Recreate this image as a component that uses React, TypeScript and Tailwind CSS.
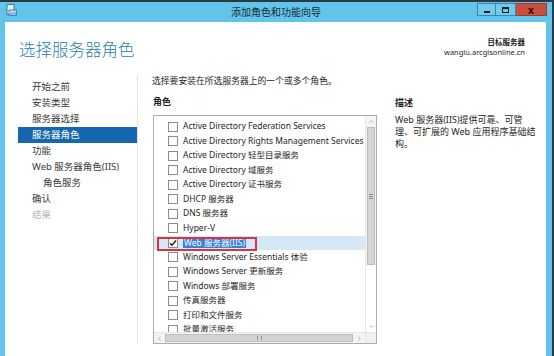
import { ChevronUp, ChevronDown, ChevronLeft, ChevronRight } from "lucide-react";

const font = { fontFamily: '"Noto Sans", "Noto Sans CJK SC", sans-serif' };

const navItems = [
  { label: "开始之前" },
  { label: "安装类型" },
  { label: "服务器选择" },
  { label: "服务器角色", active: true },
  { label: "功能" },
  { label: "Web 服务器角色(IIS)" },
  { label: "角色服务", indent: true },
  { label: "确认" },
  { label: "结果", disabled: true },
];

const roles = [
  "Active Directory Federation Services",
  "Active Directory Rights Management Services",
  "Active Directory 轻型目录服务",
  "Active Directory 域服务",
  "Active Directory 证书服务",
  "DHCP 服务器",
  "DNS 服务器",
  "Hyper-V",
  "Web 服务器(IIS)",
  "Windows Server Essentials 体验",
  "Windows Server 更新服务",
  "Windows 部署服务",
  "传真服务器",
  "打印和文件服务",
  "批量激活服务",
];

function Checkbox({ checked }: { checked?: boolean }) {
  return (
    <span className="w-[10px] h-[10px] border border-[#8c8c8c] bg-white flex items-center justify-center shrink-0">
      {checked && (
        <svg width="8" height="8" viewBox="0 0 8 8">
          <path d="M1 4.2 L3 6.3 L7 1.5" stroke="#222" strokeWidth="1.4" fill="none" />
        </svg>
      )}
    </span>
  );
}

function WindowIcon() {
  return (
    <svg width="11" height="12" viewBox="0 0 11 12">
      <rect x="1" y="0.5" width="7" height="10" fill="#e8f2fa" stroke="#3a78b0" />
      <rect x="3" y="6" width="7.5" height="5.5" fill="#8fb8dc" stroke="#3a78b0" strokeWidth="0.8" />
      <path d="M3.5 8.5 L5.5 7 L7 8 L9.5 6.8" stroke="#fff" strokeWidth="0.8" fill="none" />
    </svg>
  );
}

export default function App() {
  return (
    <div className="w-[554px] h-[356px] bg-[#2b3943] overflow-hidden" style={font}>
      <div className="w-[552px] h-[354px] mt-[2px] bg-[#62c4e8] flex flex-col">
        {/* title bar */}
        <div className="h-[20px] flex items-start relative">
          <div className="pl-[6px] pt-[2px]">
            <WindowIcon />
          </div>
          <div className="absolute left-0 right-0 top-[3px] text-center text-[10px] leading-[14px] text-[#1c2a33]">
            添加角色和功能向导
          </div>
          <div className="ml-auto mr-[5px] mt-[1px] flex h-[13px] relative">
            <div className="w-[19px] border border-[#3a86ad] bg-[#72cbea] flex items-center justify-center">
              <span className="w-[6px] h-[2px] bg-[#1a1a1a] mt-[4px]" />
            </div>
            <div className="w-[20px] border border-l-0 border-[#3a86ad] bg-[#72cbea] flex items-center justify-center">
              <span className="w-[7px] h-[6px] border border-t-2 border-[#1a1a1a]" />
            </div>
            <div className="w-[31px] border border-l-0 border-[#9e3a2f] bg-[#c9503f] flex items-center justify-center text-[10px] font-bold leading-none text-[#2a0d08]">
              x
            </div>
          </div>
        </div>

        {/* client area */}
        <div className="flex-1 ml-[5px] mr-[6px] bg-white flex flex-col">
          <div className="h-[53px] flex items-start justify-between">
            <h1 className="pl-[14px] pt-[18px] text-[16.5px] leading-[20px] font-light text-[#2c80ad]">
              选择服务器角色
            </h1>
            <div className="pr-[21px] pt-[15px] text-right text-[#1e1e1e]">
              <div className="text-[7.5px] leading-[10px] font-semibold">目标服务器</div>
              <div className="text-[7.5px] leading-[10px]">wanglu.arcgisonline.cn</div>
            </div>
          </div>

          <div className="flex flex-1">
            {/* nav */}
            <div className="w-[119px] ml-[13px] pt-[4px]">
              {navItems.map((item) => (
                <div
                  key={item.label}
                  className={
                    "h-[16px] flex items-center text-[9.5px] whitespace-nowrap " +
                    (item.indent ? "pl-[25px] " : "pl-[14px] ") +
                    (item.active
                      ? "bg-[#1666b0] text-white"
                      : item.disabled
                      ? "text-[#b8b8b8]"
                      : "text-[#3a3a3a]")
                  }
                >
                  {item.label}
                </div>
              ))}
            </div>

            {/* main */}
            <div className="h-[268px] border-l border-[#e3e3e3] pl-[14px]">
              <p className="text-[8.8px] leading-[12px] text-[#1e1e1e] whitespace-nowrap">
                选择要安装在所选服务器上的一个或多个角色。
              </p>
              <div className="flex mt-[9px]">
                <div className="ml-[1px]">
                  <div className="text-[9px] leading-[12px] font-bold text-[#1e1e1e]">角色</div>
                  <div className="mt-[7px] w-[224px] h-[229px] border border-[#acacac] flex">
                    <div className="flex-1 flex flex-col min-w-0">
                      <div className="flex-1 overflow-hidden pt-[3.5px]">
                        {roles.map((r, i) => {
                          const sel = i === 8;
                          return (
                            <div
                              key={r}
                              className={
                                "h-[14.5px] flex items-center pl-[14px] gap-[5px] relative whitespace-nowrap text-[8.5px] text-[#262626] " +
                                (sel ? "bg-[#d5e8f8]" : "")
                              }
                            >
                              <Checkbox checked={sel} />
                              {sel ? (
                                <span className="bg-[#3581d8] text-white leading-[11px] px-[1px]">{r}</span>
                              ) : (
                                <span>{r}</span>
                              )}
                              {sel && (
                                <span className="absolute left-[3px] top-[1px] w-[100px] h-[14px] border-2 border-[#d9333b]" />
                              )}
                            </div>
                          );
                        })}
                      </div>
                      <div className="h-[11px] flex items-stretch border-t border-[#e6e6e6] bg-[#f4f4f4]">
                        <div className="w-[11px] flex items-center justify-center">
                          <ChevronLeft size={7} strokeWidth={2} className="text-[#8a8a8a]" />
                        </div>
                        <div className="flex-1 my-[1px] bg-[#d4d4d4] border border-[#bdbdbd] flex items-center justify-center">
                          <span className="w-[5px] h-[4px] border-x border-[#8f8f8f]" />
                        </div>
                        <div className="w-[12px] flex items-center justify-center">
                          <ChevronRight size={7} strokeWidth={2} className="text-[#8a8a8a]" />
                        </div>
                      </div>
                    </div>
                    <div className="w-[11px] flex flex-col border-l border-[#e6e6e6] bg-[#f4f4f4]">
                      <div className="h-[11px] flex items-center justify-center">
                        <ChevronUp size={7} strokeWidth={2} className="text-[#8a8a8a]" />
                      </div>
                      <div className="h-[138px] mx-[1px] bg-[#d4d4d4] border border-[#bdbdbd] flex items-center justify-center">
                        <span className="w-[4px] h-[5px] border-y border-[#8f8f8f] flex items-center">
                          <span className="w-full h-px bg-[#8f8f8f]" />
                        </span>
                      </div>
                      <div className="flex-1 bg-white" />
                      <div className="h-[12px] flex items-center justify-center bg-white">
                        <ChevronDown size={7} strokeWidth={2} className="text-[#8a8a8a]" />
                      </div>
                      <div className="h-[11px] bg-[#f0f0f0] border-t border-[#e6e6e6]" />
                    </div>
                  </div>
                </div>

                <div className="ml-[18px] pt-[1px] text-[#1e1e1e]">
                  <div className="text-[9px] leading-[12px] font-bold">描述</div>
                  <div className="mt-[5px] text-[9px] leading-[12px] whitespace-nowrap">
                    <div>Web 服务器(IIS)提供可靠、可管</div>
                    <div>理、可扩展的 Web 应用程序基础结</div>
                    <div>构。</div>
                  </div>
                </div>
              </div>
            </div>
          </div>
        </div>
      </div>
    </div>
  );
}
